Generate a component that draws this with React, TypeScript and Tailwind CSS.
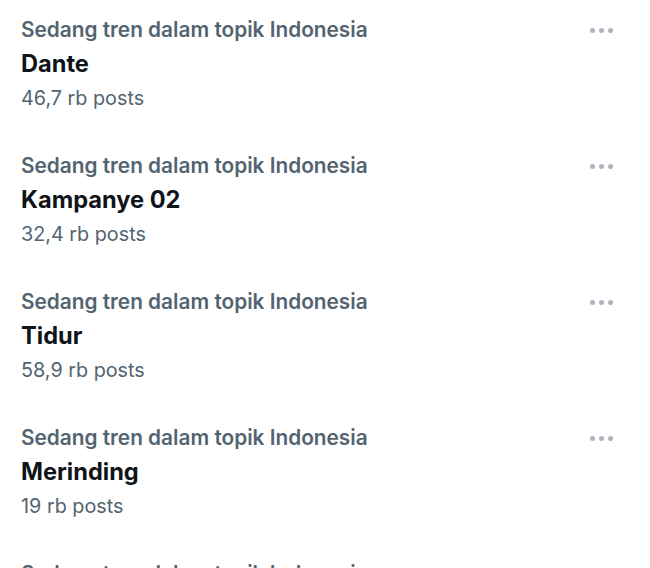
import React from 'react';

interface Trend {
  topic: string;
  name: string;
  posts: string;
}

const trends: Trend[] = [
  { topic: 'Sedang tren dalam topik Indonesia', name: 'Dante', posts: '46,7 rb posts' },
  { topic: 'Sedang tren dalam topik Indonesia', name: 'Kampanye 02', posts: '32,4 rb posts' },
  { topic: 'Sedang tren dalam topik Indonesia', name: 'Tidur', posts: '58,9 rb posts' },
  { topic: 'Sedang tren dalam topik Indonesia', name: 'Merinding', posts: '19 rb posts' },
  { topic: 'Sedang tren dalam topik Indonesia', name: 'Pemilu', posts: '12 rb posts' },
];

const MoreDots = () => (
  <div className="flex items-center gap-[4px] pt-[1px]">
    <span className="w-[5px] h-[5px] rounded-full bg-[#aab4bd]" />
    <span className="w-[5px] h-[5px] rounded-full bg-[#aab4bd]" />
    <span className="w-[5px] h-[5px] rounded-full bg-[#aab4bd]" />
  </div>
);

const TrendItem: React.FC<{ trend: Trend }> = ({ trend }) => (
  <div className="flex justify-between pl-[21px] pr-[37px] pt-[13px] pb-[21px]">
    <div className="flex flex-col">
      <span className="text-[20.8px] leading-[34px] font-semibold text-[#536471] whitespace-nowrap">{trend.topic}</span>
      <span className="text-[23.6px] leading-[34px] font-bold text-[#0f1419] whitespace-nowrap">{trend.name}</span>
      <span className="text-[19.8px] leading-[34px] text-[#536471] whitespace-nowrap">{trend.posts}</span>
    </div>
    <div className="h-[34px] flex items-center">
      <MoreDots />
    </div>
  </div>
);

export default function App() {
  return (
    <div className="w-[650px] h-[568px] overflow-hidden bg-white font-['Inter',sans-serif]">
      {trends.map((t, i) => (
        <TrendItem key={i} trend={t} />
      ))}
    </div>
  );
}
